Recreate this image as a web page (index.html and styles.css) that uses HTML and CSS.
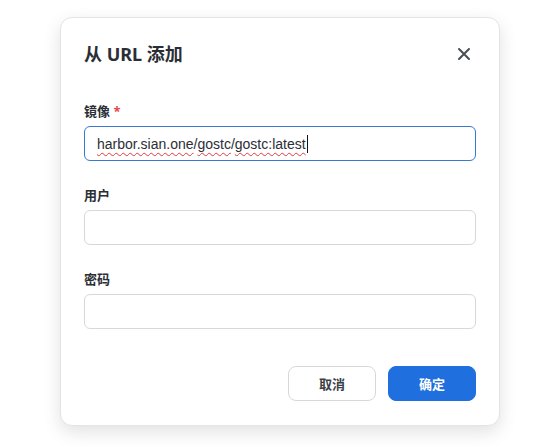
FILE: index.html
```html
<!DOCTYPE html>
<html lang="zh-CN">
<head>
  <meta charset="UTF-8" />
  <title>从 URL 添加</title>
  <link rel="stylesheet" href="styles.css">
</head>
<body>
  <!-- 弹窗 -->
  <div class="dialog">
    <div class="dialog-head">
      <h2 class="dialog-title">从 URL 添加</h2>
      <button class="dialog-close" aria-label="关闭">
        <svg width="14" height="14" viewBox="0 0 14 14"><path d="M2 2 L12 12 M12 2 L2 12" stroke="#4a4d55" stroke-width="2" stroke-linecap="round"/></svg>
      </button>
    </div>

    <div class="field">
      <label class="field-label">镜像 <span class="req">*</span></label>
      <div class="field-input is-focus"><span class="typo">harbor.sian.one</span>/<span class="typo">gostc</span>/<span class="typo">gostc:latest</span><span class="caret"></span></div>
    </div>

    <div class="field">
      <label class="field-label">用户</label>
      <div class="field-input"></div>
    </div>

    <div class="field">
      <label class="field-label">密码</label>
      <div class="field-input"></div>
    </div>

    <div class="dialog-foot">
      <button class="btn btn-ghost">取消</button>
      <button class="btn btn-primary">确定</button>
    </div>
  </div>
</body>
</html>
```

FILE: styles.css
```css
* { margin: 0; padding: 0; box-sizing: border-box; }
html, body { width: 100%; height: 100%; background: #fff; }
body {
  font-family: "Noto Sans", "Noto Sans CJK SC", sans-serif;
  color: #2b2e35;
  padding: 17px 0 0 60px;
}

/* 弹窗 */
.dialog {
  width: 440px; height: 409px;
  background: #fff;
  border: 1px solid #e3e4e6;
  border-radius: 12px;
  box-shadow: 0 6px 18px rgba(0,0,0,0.12);
  padding: 23px 23px 0;
}
.dialog-head {
  display: flex; align-items: center; justify-content: space-between;
  height: 26px; margin-bottom: 34px;
}
.dialog-title { font-size: 18px; font-weight: 700; line-height: 26px; }
.dialog-close {
  width: 22px; height: 22px; margin-right: 1px;
  border: none; background: none;
  display: flex; align-items: center; justify-content: center;
}

/* 表单 */
.field { margin-bottom: 24px; }
.field-label {
  display: block;
  font-size: 13px; font-weight: 700; line-height: 20px;
  margin-bottom: 5px;
}
.req { color: #e5484d; font-weight: 700; }
.field-input {
  height: 35px;
  border: 1px solid #d6d8dc;
  border-radius: 6px;
  padding: 0 12px;
  display: flex; align-items: center;
  font-family: "Liberation Sans", "Noto Sans CJK SC", sans-serif;
  font-size: 14px; color: #2b2e35;
  white-space: pre;
}
.field-input.is-focus { border-color: #3b78cf; }
.typo { text-decoration: underline wavy #e0393e; text-decoration-thickness: 1px; text-underline-offset: 3px; }
.caret { width: 1px; height: 18px; background: #111; margin-left: 1px; }

/* 底部按钮 */
.dialog-foot {
  display: flex; justify-content: flex-end; gap: 12px;
  margin-top: 37px;
}
.btn {
  width: 88px; height: 35px;
  border-radius: 8px;
  font-family: inherit; font-size: 13px; font-weight: 700;
}
.btn-ghost { background: #fff; border: 1px solid #d6d8dc; color: #3b3f47; }
.btn-primary { background: #1f6fde; border: 1px solid #1f6fde; color: #fff; }
```
